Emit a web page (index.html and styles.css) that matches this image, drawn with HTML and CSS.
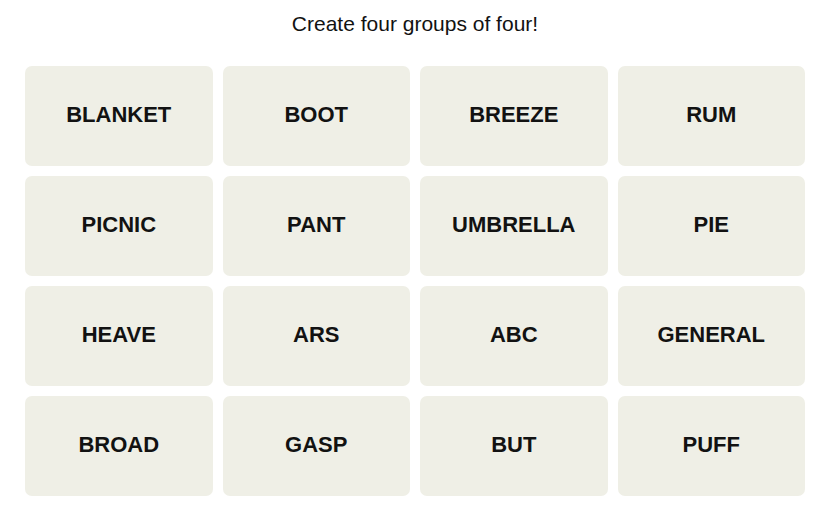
FILE: index.html
```html
<!DOCTYPE html>
<html>
<head>
<meta charset="utf-8" />
<title>Connections</title>
<link rel="stylesheet" href="styles.css">
</head>
<body>
<div id="game">
	<p class="intro">Create four groups of four!</p>
	<div class="board">
		<div class="card">BLANKET</div>
		<div class="card">BOOT</div>
		<div class="card">BREEZE</div>
		<div class="card">RUM</div>
		<div class="card">PICNIC</div>
		<div class="card">PANT</div>
		<div class="card">UMBRELLA</div>
		<div class="card">PIE</div>
		<div class="card">HEAVE</div>
		<div class="card">ARS</div>
		<div class="card">ABC</div>
		<div class="card">GENERAL</div>
		<div class="card">BROAD</div>
		<div class="card">GASP</div>
		<div class="card">BUT</div>
		<div class="card">PUFF</div>
	</div>
</div>
</body>
</html>
```

FILE: styles.css
```css
*{ margin:0; padding:0; }
body{ background:#fff; color:#121212; font-family:"Liberation Sans", Arial, sans-serif; }
#game{ width:780px; margin-left:25px; }
.intro{ text-align:center; font-size:21px; line-height:24px; margin-top:12px; }
.board{ display:grid; grid-template-columns:repeat(4, 1fr); grid-auto-rows:100px; gap:10px; margin-top:30px; }
.card{ display:flex; align-items:center; justify-content:center; background:#efefe6; border-radius:7px; font-size:22px; font-weight:bold; padding-bottom:3px; }
```
